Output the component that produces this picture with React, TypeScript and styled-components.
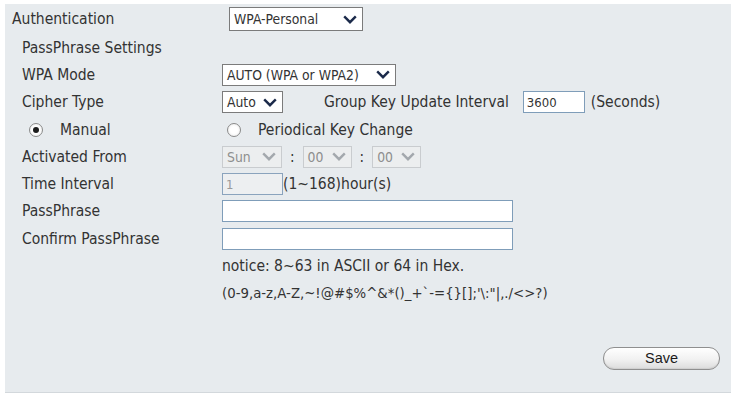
import React from 'react';
import styled, { createGlobalStyle } from 'styled-components';

const GlobalStyle = createGlobalStyle`
  html, body {
    margin: 0;
    padding: 0;
    background: #ffffff;
  }
  body {
    font-family: 'DejaVu Sans', 'Liberation Sans', sans-serif;
    font-stretch: condensed;
    color: #333333;
  }
`;

const Panel = styled.div`
  margin: 4px 0 0 5px;
  width: 726px;
  height: 389px;
  box-sizing: border-box;
  background: #e7ebee;
  border-bottom: 1px solid #d3d8dc;
  display: flex;
  flex-direction: column;
`;

const Row = styled.div<{ height?: number }>`
  display: grid;
  grid-template-columns: 217px 1fr;
  align-items: center;
  height: ${({ height }) => height ?? 27.3}px;
  font-size: 15.5px;
`;

const Label = styled.div<{ indent?: number }>`
  padding-left: ${({ indent }) => indent ?? 17}px;
  white-space: nowrap;
`;

const Value = styled.div<{ offset?: number }>`
  display: flex;
  align-items: center;
  padding-left: ${({ offset }) => offset ?? 0}px;
  white-space: nowrap;
`;

const SelectBox = styled.div<{ w: number; h?: number; disabled?: boolean }>`
  box-sizing: border-box;
  width: ${({ w }) => w}px;
  height: ${({ h }) => h ?? 22}px;
  display: flex;
  align-items: center;
  justify-content: space-between;
  padding: 0 5px 0 4px;
  background: ${({ disabled }) => (disabled ? '#eceeef' : '#ffffff')};
  border: 1px solid ${({ disabled }) => (disabled ? '#c9cccf' : '#7b7b7b')};
  color: ${({ disabled }) => (disabled ? '#8e8e8e' : '#333333')};
  font-size: 13.8px;
`;

const Chevron = ({ color }: { color: string }) => (
  <svg width="14" height="9" viewBox="0 0 14 9">
    <path d="M1.2 1.4 L7 7.2 L12.8 1.4" fill="none" stroke={color} strokeWidth="2.4" />
  </svg>
);

const TextBox = styled.div<{ w: number; disabled?: boolean; blue?: boolean }>`
  box-sizing: border-box;
  width: ${({ w }) => w}px;
  height: 22px;
  display: flex;
  align-items: center;
  padding-left: 3px;
  background: ${({ disabled }) => (disabled ? '#edeff1' : '#ffffff')};
  border: 1px solid ${({ blue, disabled }) => (disabled ? '#8aa3bd' : blue ? '#7f9db9' : '#7b7b7b')};
  color: ${({ disabled }) => (disabled ? '#9a9a9a' : '#333333')};
  font-size: 13px;
`;

const Colon = styled.span`
  margin: 0 8px;
  font-size: 15px;
`;

const Side = styled.span<{ left?: number; right?: number }>`
  margin-left: ${({ left }) => left ?? 0}px;
  margin-right: ${({ right }) => right ?? 0}px;
`;

const RadioCircle = styled.span<{ checked?: boolean }>`
  box-sizing: border-box;
  width: 14px;
  height: 14px;
  border-radius: 50%;
  border: 1px solid #8a8a8a;
  background: radial-gradient(circle, #ffffff 40%, #e8e8e8 100%);
  display: inline-flex;
  align-items: center;
  justify-content: center;

  &::after {
    content: '';
    display: ${({ checked }) => (checked ? 'block' : 'none')};
    width: 6px;
    height: 6px;
    border-radius: 50%;
    background: #1c1c1c;
  }
`;

const Radio = styled.label<{ left: number }>`
  display: flex;
  align-items: center;
  gap: 17px;
  padding-left: ${({ left }) => left}px;
`;

const Hint = styled.div<{ small?: boolean }>`
  font-size: ${({ small }) => (small ? 13.3 : 15.5)}px;
  font-stretch: ${({ small }) => (small ? 'normal' : 'condensed')};
`;

const Footer = styled.div`
  display: flex;
  justify-content: flex-end;
  padding: 40px 11px 0 0;
`;

const SaveButton = styled.button`
  box-sizing: border-box;
  width: 117px;
  height: 23px;
  border-radius: 11px;
  border: 1px solid #8f8f8f;
  background: linear-gradient(#ffffff, #f1f1f1 55%, #dcdcdc);
  box-shadow: inset 0 -1px 1px #cfcfcf;
  font-family: 'Liberation Sans', Arial, sans-serif;
  font-stretch: normal;
  font-size: 14.5px;
  color: #1a1a1a;
  padding: 0;
`;

export default function App(): JSX.Element {
  return (
    <>
      <GlobalStyle />
      <Panel>
        <Row height={30}>
          <Label indent={7}>Authentication</Label>
          <Value offset={7}>
            <SelectBox w={134} h={24}>
              WPA-Personal
              <Chevron color="#1b2a4a" />
            </SelectBox>
          </Value>
        </Row>
        <Row>
          <Label>PassPhrase Settings</Label>
        </Row>
        <Row>
          <Label>WPA Mode</Label>
          <Value>
            <SelectBox w={174}>
              AUTO (WPA or WPA2)
              <Chevron color="#1b2a4a" />
            </SelectBox>
          </Value>
        </Row>
        <Row>
          <Label>Cipher Type</Label>
          <Value>
            <SelectBox w={61}>
              Auto
              <Chevron color="#1b2a4a" />
            </SelectBox>
            <Side left={41} right={14}>
              Group Key Update Interval
            </Side>
            <TextBox w={62} blue>
              3600
            </TextBox>
            <Side left={6}>(Seconds)</Side>
          </Value>
        </Row>
        <Row>
          <Radio left={24}>
            <RadioCircle checked />
            Manual
          </Radio>
          <Radio left={5}>
            <RadioCircle />
            Periodical Key Change
          </Radio>
        </Row>
        <Row>
          <Label>Activated From</Label>
          <Value>
            <SelectBox w={60} disabled>
              Sun
              <Chevron color="#a3a8ad" />
            </SelectBox>
            <Colon>:</Colon>
            <SelectBox w={49} disabled>
              00
              <Chevron color="#a3a8ad" />
            </SelectBox>
            <Colon>:</Colon>
            <SelectBox w={49} disabled>
              00
              <Chevron color="#a3a8ad" />
            </SelectBox>
          </Value>
        </Row>
        <Row>
          <Label>Time Interval</Label>
          <Value>
            <TextBox w={61} disabled>
              1
            </TextBox>
            <span>(1~168)hour(s)</span>
          </Value>
        </Row>
        <Row>
          <Label>PassPhrase</Label>
          <Value>
            <TextBox w={291} blue />
          </Value>
        </Row>
        <Row>
          <Label>Confirm PassPhrase</Label>
          <Value>
            <TextBox w={291} blue />
          </Value>
        </Row>
        <Row>
          <span />
          <Hint>notice: 8~63 in ASCII or 64 in Hex.</Hint>
        </Row>
        <Row>
          <span />
          <Hint small>(0-9,a-z,A-Z,~!@#$%^&amp;*()_+`-={'{}'}[];'\:"|,./&lt;&gt;?)</Hint>
        </Row>
        <Footer>
          <SaveButton>Save</SaveButton>
        </Footer>
      </Panel>
    </>
  );
}
